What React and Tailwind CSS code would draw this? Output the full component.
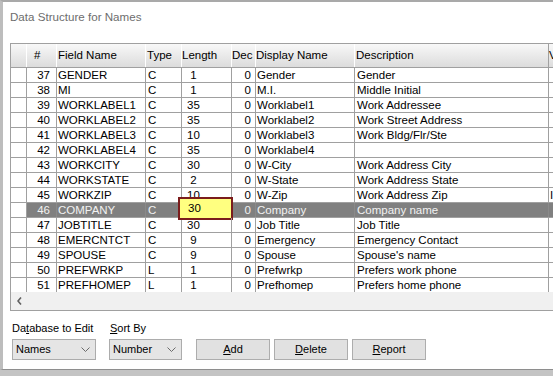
import React from "react";

const rows = [
  ["37", "GENDER", "C", "1", "0", "Gender", "Gender"],
  ["38", "MI", "C", "1", "0", "M.I.", "Middle Initial"],
  ["39", "WORKLABEL1", "C", "35", "0", "Worklabel1", "Work Addressee"],
  ["40", "WORKLABEL2", "C", "35", "0", "Worklabel2", "Work Street Address"],
  ["41", "WORKLABEL3", "C", "10", "0", "Worklabel3", "Work Bldg/Flr/Ste"],
  ["42", "WORKLABEL4", "C", "35", "0", "Worklabel4", ""],
  ["43", "WORKCITY", "C", "30", "0", "W-City", "Work Address City"],
  ["44", "WORKSTATE", "C", "2", "0", "W-State", "Work Address State"],
  ["45", "WORKZIP", "C", "10", "0", "W-Zip", "Work Address Zip", "I"],
  ["46", "COMPANY", "C", "30", "0", "Company", "Company name"],
  ["47", "JOBTITLE", "C", "30", "0", "Job Title", "Job Title"],
  ["48", "EMERCNTCT", "C", "9", "0", "Emergency", "Emergency Contact"],
  ["49", "SPOUSE", "C", "9", "0", "Spouse", "Spouse's name"],
  ["50", "PREFWRKP", "L", "1", "0", "Prefwrkp", "Prefers work phone"],
  ["51", "PREFHOMEP", "L", "1", "0", "Prefhomep", "Prefers home phone"],
];

function Chevron() {
  return (
    <svg width="9" height="5" viewBox="0 0 9 5" className="shrink-0">
      <polyline points="0.5,0.5 4.5,4.5 8.5,0.5" fill="none" stroke="#6b6b6b" strokeWidth="1" />
    </svg>
  );
}

function Select({ value, width }) {
  return (
    <div className={`${width} h-[21px] bg-[#e5e5e5] border border-[#acacac] flex items-center justify-between pl-[3px] pr-[5px] text-[11px] text-black`}>
      <span>{value}</span>
      <Chevron />
    </div>
  );
}

function Button({ hot, rest }) {
  return (
    <div className="w-[74px] h-[21px] bg-[#e1e1e1] border border-[#adadad] flex items-center justify-center text-[11px] text-black">
      <span>
        <u className="underline-offset-1">{hot}</u>
        {rest}
      </span>
    </div>
  );
}

export default function App() {
  return (
    <div className="w-[553px] h-[376px] overflow-hidden bg-[#c4c4c4] font-['Liberation_Sans',Arial,sans-serif]">
      <div className="h-[370px] bg-white border-t-2 border-l-[3px] border-b border-t-[#a9a9a9] border-l-[#bdbdbd] border-b-[#8e8e8e] flex flex-col">
        <div className="pl-[7px] pt-[8px] h-[22px] leading-[14px] text-[11.6px] text-[#6d6d6d]">Data Structure for Names</div>

        {/* grid */}
        <div className="ml-[7px] mt-[19px] w-[600px] border border-r-0 border-[#a0a0a0] flex flex-col">
          <div className="h-[24px] flex border-b border-[#a0a0a0] bg-gradient-to-b from-[#f8f8f8] to-[#dcdcdc] text-[11.5px] text-black leading-[23px]">
            <div className="w-[16px] border-r border-white" />
            <div className="w-[30px] border-r border-white pl-[7px]">#</div>
            <div className="w-[89px] border-r border-white pl-[1px]">Field Name</div>
            <div className="w-[36px] border-r border-white pl-[1px]">Type</div>
            <div className="w-[50px] border-r border-white">Length</div>
            <div className="w-[24px] border-r border-white overflow-hidden whitespace-nowrap">Dec</div>
            <div className="w-[99px] border-r border-white">Display Name</div>
            <div className="w-[194px] border-r border-[#a0a0a0] pl-[1px]">Description</div>
            <div className="w-[60px]">V</div>
          </div>

          <div className="h-[224px] overflow-hidden flex flex-col">
            {rows.map((r, i) => {
              const sel = r[0] === "46";
              const last = i === rows.length - 1;
              const line = sel ? "border-[#8a8a8a]" : "border-[#a0a0a0]";
              return (
                <div
                  key={r[0]}
                  className={`flex shrink-0 text-[11.5px] leading-[14px] whitespace-nowrap ${last ? "h-[14px]" : "h-[15px] border-b border-[#a0a0a0]"} ${sel ? "text-[#f2f2f2]" : "text-black"}`}
                >
                  <div className="w-[16px] border-r border-[#a0a0a0] bg-white" />
                  <div className={`flex ${sel ? "bg-[#808080]" : "bg-white"}`}>
                    <div className={`w-[30px] border-r ${line} text-right pr-[6px]`}>{r[0]}</div>
                    <div className={`w-[89px] border-r ${line} pl-[1px]`}>{r[1]}</div>
                    <div className={`w-[36px] border-r ${line} pl-[2px]`}>{r[2]}</div>
                    <div className={`relative w-[50px] border-r ${line} text-center pr-[26px]`}>
                      {sel ? (
                        <div className="absolute -left-[4px] -top-[6px] w-[55px] h-[23px] border-2 border-[#7b1c1c] bg-[#ffff80] text-black text-left pl-[8px] leading-[19px] text-[11.5px]">
                          {r[3]}
                        </div>
                      ) : (
                        r[3]
                      )}
                    </div>
                    <div className={`w-[24px] border-r ${line} text-right pr-[4px]`}>{r[4]}</div>
                    <div className={`w-[99px] border-r ${line} pl-[1px]`}>{r[5]}</div>
                    <div className={`w-[194px] border-r ${line} pl-[2px]`}>{r[6]}</div>
                    <div className="w-[60px] pl-[1px]">{r[7] || ""}</div>
                  </div>
                </div>
              );
            })}
          </div>

          <div className="h-[18px] bg-[#f0f0f0] flex items-center pl-[6px]">
            <svg width="5" height="8" viewBox="0 0 5 8">
              <polyline points="4,0.5 1,4 4,7.5" fill="none" stroke="#606060" strokeWidth="1.6" />
            </svg>
          </div>
        </div>

        {/* bottom controls */}
        <div className="mt-[10px] pl-[9px] flex items-end text-[11px] text-black">
          <div className="flex flex-col gap-[4px]">
            <div className="leading-[14px]">
              Da<u className="underline-offset-1">t</u>abase to Edit
            </div>
            <Select value="Names" width="w-[84px]" />
          </div>
          <div className="flex flex-col gap-[4px] ml-[13px]">
            <div className="leading-[14px] pl-[1px]">
              <u className="underline-offset-1">S</u>ort By
            </div>
            <Select value="Number" width="w-[73px]" />
          </div>
          <div className="flex gap-[4px] ml-[14px]">
            <Button hot="A" rest="dd" />
            <Button hot="D" rest="elete" />
            <Button hot="R" rest="eport" />
          </div>
        </div>
      </div>
    </div>
  );
}
